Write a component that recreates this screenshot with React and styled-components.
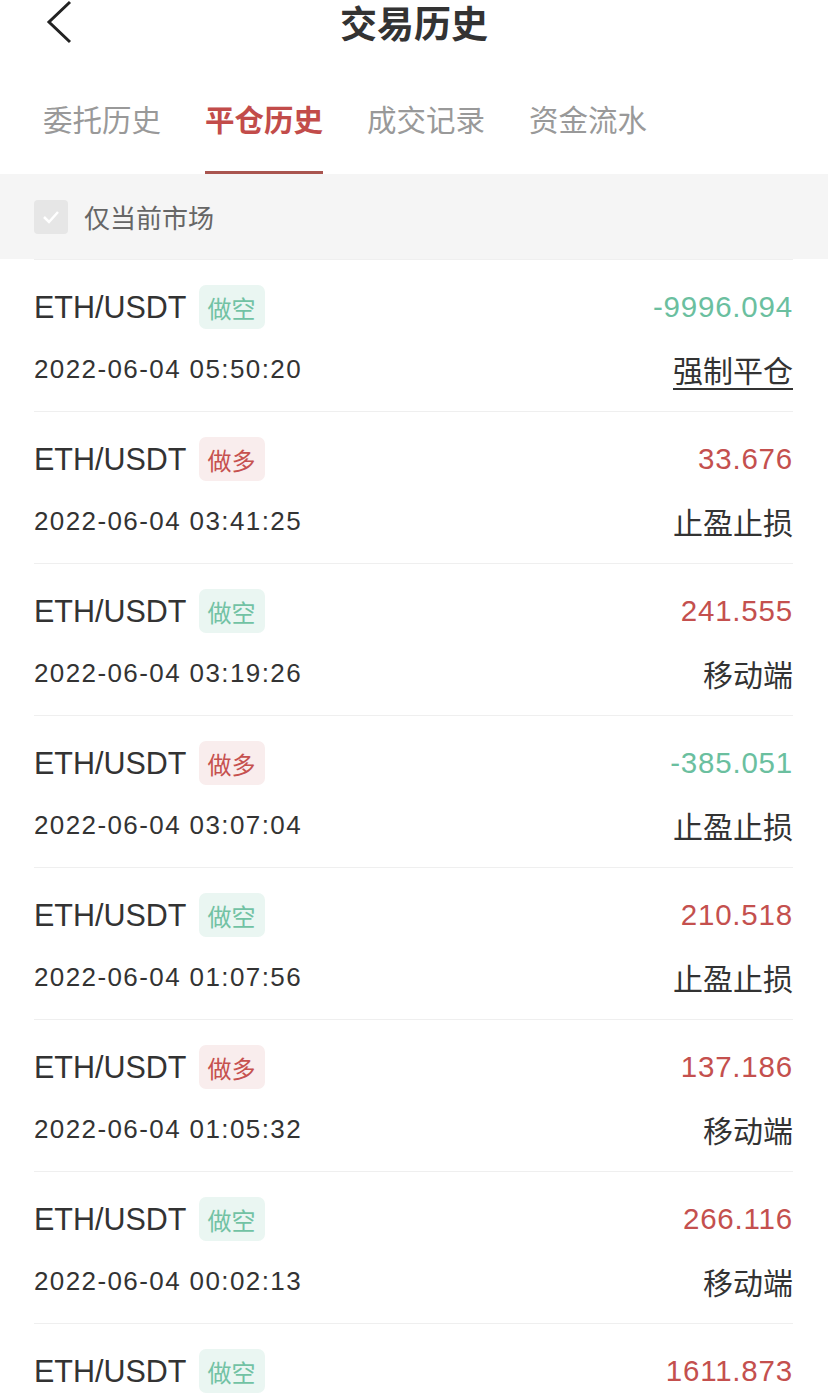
import React from "react";
import styled, { createGlobalStyle } from "styled-components";

const Global = createGlobalStyle`
  html, body { margin: 0; padding: 0; background: #fff; }
  body { font-family: "Liberation Sans", "Noto Sans CJK SC", sans-serif; color: #333; }
  * { box-sizing: border-box; }
`;

const Page = styled.div`
  width: 828px;
  min-height: 1396px;
  background: #fff;
  overflow: hidden;
`;

const Header = styled.header`
  height: 44px;
  display: grid;
  grid-template-columns: 1fr auto 1fr;
  align-items: center;
`;

const Back = styled.button`
  justify-self: start;
  margin-left: 45px;
  padding: 0;
  border: 0;
  background: none;
  width: 30px;
  height: 44px;
  display: flex;
  align-items: center;
`;

const Title = styled.h1`
  margin: 0;
  font-size: 37px;
  line-height: 44px;
  font-weight: 600;
  color: #333;
  font-family: "Noto Sans CJK SC", sans-serif;
`;

const Tabs = styled.nav`
  height: 130px;
  display: flex;
  gap: 44px;
  padding-left: 43px;
`;

const Tab = styled.div`
  height: 130px;
  padding-top: 59px;
  font-family: "Noto Sans CJK SC", sans-serif;
  font-size: 29.5px;
  line-height: 30px;
  color: ${(p) => (p.$active ? "#c24c4a" : "#999")};
  font-weight: ${(p) => (p.$active ? 600 : 400)};
  border-bottom: 3px solid ${(p) => (p.$active ? "#a9554f" : "transparent")};
`;

const Filter = styled.div`
  height: 85px;
  background: #f5f5f5;
  display: flex;
  align-items: center;
  gap: 16px;
  padding-left: 34px;
`;

const Check = styled.span`
  width: 34px;
  height: 34px;
  border-radius: 4px;
  background: #e6e6e6;
  display: flex;
  align-items: center;
  justify-content: center;
`;

const FilterLabel = styled.span`
  font-family: "Noto Sans CJK SC", sans-serif;
  font-size: 26px;
  color: #666;
`;

const List = styled.div`
  padding: 0 35px 0 34px;
`;

const Row = styled.div`
  height: 152px;
  border-top: 1px solid #efefef;
  padding-top: 25px;
  display: grid;
  grid-template-rows: 44px 44px;
  row-gap: 18px;
`;

const Line = styled.div`
  display: flex;
  align-items: center;
`;

const Pair = styled.span`
  font-size: 30.5px;
  color: #333;
`;

const Tag = styled.span`
  margin-left: 12px;
  height: 44px;
  padding: 0 9px;
  border-radius: 7px;
  display: flex;
  align-items: center;
  font-family: "Noto Sans CJK SC", sans-serif;
  font-size: 24px;
  background: ${(p) => (p.$long ? "#f9eded" : "#eaf6f2")};
  color: ${(p) => (p.$long ? "#c6514f" : "#72c2a4")};
`;

const Value = styled.span`
  margin-left: auto;
  font-size: 29.5px;
  letter-spacing: 0.8px;
  color: ${(p) => (p.$neg ? "#6bbf9f" : "#c4504e")};
`;

const Time = styled.span`
  font-size: 26px;
  letter-spacing: 1.4px;
  color: #333;
`;

const Source = styled.span`
  margin-left: auto;
  font-family: "Noto Sans CJK SC", sans-serif;
  font-size: 30px;
  color: #333;
  text-decoration: ${(p) => (p.$link ? "underline" : "none")};
  text-decoration-thickness: 2px;
  text-underline-offset: 6px;
`;

const rows = [
  { long: false, value: "-9996.094", time: "2022-06-04 05:50:20", src: "强制平仓", link: true },
  { long: true, value: "33.676", time: "2022-06-04 03:41:25", src: "止盈止损" },
  { long: false, value: "241.555", time: "2022-06-04 03:19:26", src: "移动端" },
  { long: true, value: "-385.051", time: "2022-06-04 03:07:04", src: "止盈止损" },
  { long: false, value: "210.518", time: "2022-06-04 01:07:56", src: "止盈止损" },
  { long: true, value: "137.186", time: "2022-06-04 01:05:32", src: "移动端" },
  { long: false, value: "266.116", time: "2022-06-04 00:02:13", src: "移动端" },
  { long: false, value: "1611.873", time: "2022-06-03 23:48:09", src: "移动端" },
];

const tabs = ["委托历史", "平仓历史", "成交记录", "资金流水"];

export default function App() {
  return (
    <Page>
      <Global />
      <Header>
        <Back aria-label="back">
          <svg width="30" height="44" viewBox="0 0 30 44">
            <path d="M25 2 L4 22 L25 42" fill="none" stroke="#222" strokeWidth="3" />
          </svg>
        </Back>
        <Title>交易历史</Title>
        <span />
      </Header>
      <Tabs>
        {tabs.map((t, i) => (
          <Tab key={t} $active={i === 1}>{t}</Tab>
        ))}
      </Tabs>
      <Filter>
        <Check>
          <svg width="20" height="16" viewBox="0 0 20 16">
            <path d="M3 8 L8 13 L17 3" fill="none" stroke="#fff" strokeWidth="2.5" />
          </svg>
        </Check>
        <FilterLabel>仅当前市场</FilterLabel>
      </Filter>
      <List>
        {rows.map((r, i) => (
          <Row key={i}>
            <Line>
              <Pair>ETH/USDT</Pair>
              <Tag $long={r.long}>{r.long ? "做多" : "做空"}</Tag>
              <Value $neg={r.value.startsWith("-")}>{r.value}</Value>
            </Line>
            <Line>
              <Time>{r.time}</Time>
              <Source $link={r.link}>{r.src}</Source>
            </Line>
          </Row>
        ))}
      </List>
    </Page>
  );
}
